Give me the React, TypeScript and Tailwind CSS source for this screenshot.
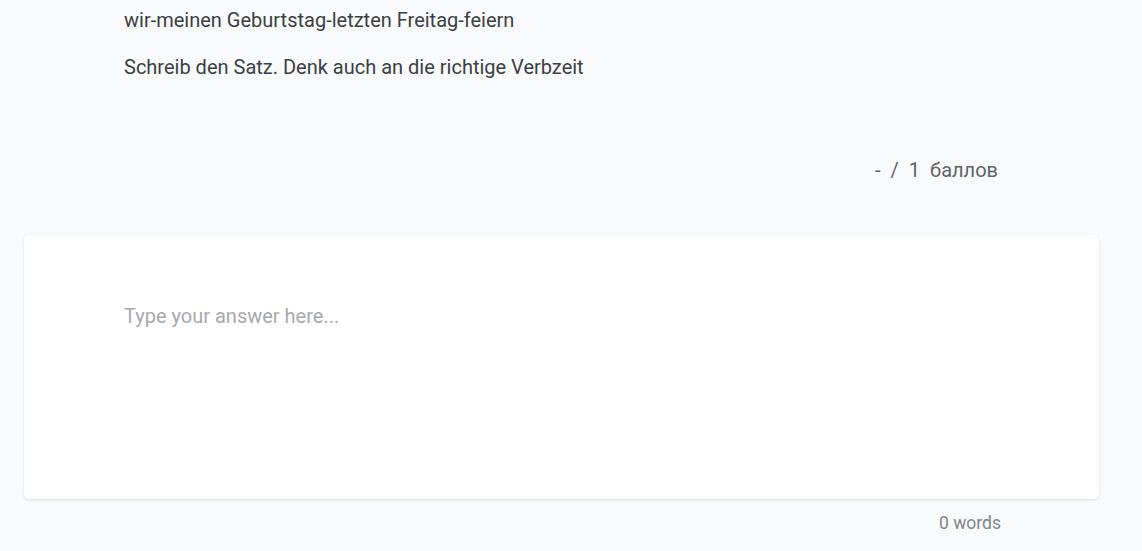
export default function App() {
  return (
    <div
      className="min-h-screen bg-[#f9fafc] text-[#3c4043]"
      style={{ fontFamily: 'Roboto, "Noto Sans", sans-serif' }}
    >
      <div className="ml-[24px] w-[1075px]">
        {/* Question */}
        <div className="px-[100px] pt-[6px]">
          <p className="text-[20px] leading-[28px]">wir-meinen Geburtstag-letzten Freitag-feiern</p>
          <p className="mt-[19px] text-[20px] leading-[28px]">
            Schreib den Satz. Denk auch an die richtige Verbzeit
          </p>
          <div className="mt-[75px] flex justify-end pr-[1px] text-[20px] leading-[28px] text-[#5f6368]">
            <span>-</span>
            <span className="ml-[10px]">/</span>
            <span className="ml-[10px]">1</span>
            <span className="ml-[10px]">баллов</span>
          </div>
        </div>

        {/* Answer card */}
        <div className="mt-[51px] h-[264px] rounded-[5px] bg-white px-[100px] pt-[67px] shadow-[0_1px_3px_rgba(0,0,0,0.12)]">
          <textarea
            autoFocus
            placeholder="Type your answer here..."
            className="h-[160px] w-full resize-none bg-transparent text-[20px] leading-[28px] text-[#3c4043] caret-[#1a73e8] outline-none placeholder:text-[#a6a9ad]"
          />
        </div>

        <div className="mt-[10px] flex justify-end px-[98px] text-[17.5px] leading-[28px] text-[#80868b]">
          0 words
        </div>
      </div>
    </div>
  );
}
